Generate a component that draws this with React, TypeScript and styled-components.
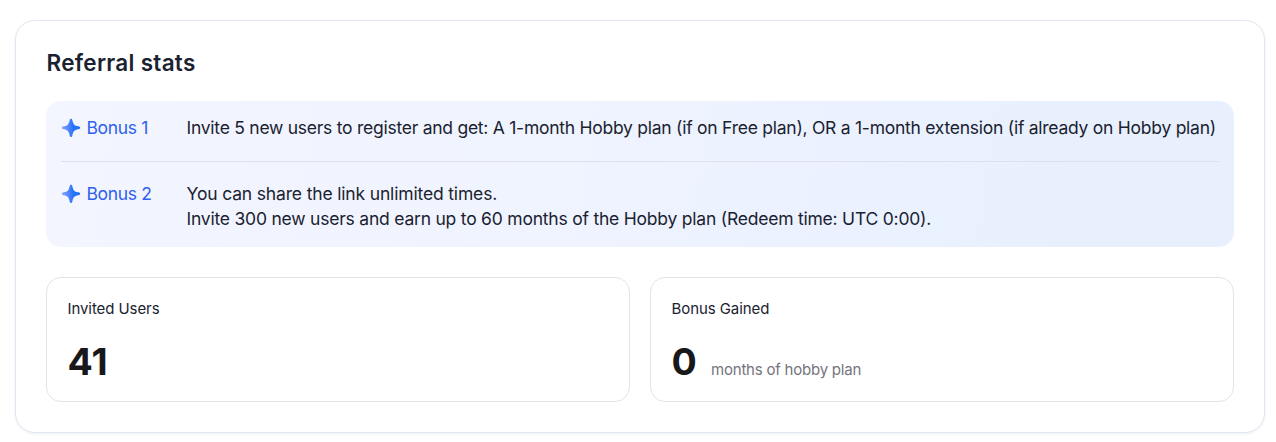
import React from "react";
import styled, { createGlobalStyle } from "styled-components";

const GlobalStyle = createGlobalStyle`
  * { box-sizing: border-box; }
  body { margin: 0; background: #fff; font-family: Inter, "Liberation Sans", sans-serif; color: #1a2230; }
`;

const Page = styled.main`
  padding: 20px 11px 9px 15px;
`;

const Card = styled.section`
  height: 413px;
  padding: 27px 30px 30px;
  border: 1px solid #e1e7f2;
  border-radius: 20px;
  background: #fff;
  box-shadow: 0 1px 3px rgba(40, 60, 110, 0.08);
`;

const Title = styled.h2`
  margin: 0 0 23px;
  padding-left: 0.6px;
  font-size: 22.5px;
  line-height: 30px;
  font-weight: 600;
  letter-spacing: 0.28px;
`;

const Banner = styled.div`
  height: 146px;
  padding: 14px 14px 15px 15px;
  border-radius: 15px;
  background: linear-gradient(98deg, #f3f5ff 0%, #f0f4ff 40%, #ebf1ff 65%, #e8f0fe 85%, #e8f0fe 100%);
`;

const BonusRow = styled.div`
  display: flex;
  align-items: flex-start;
  font-size: 17.5px;
  line-height: 25px;
  & + & {
    margin-top: 21px;
    padding-top: 19px;
    border-top: 1px solid #dfe1e8;
  }
`;

const BonusName = styled.div`
  display: flex;
  align-items: center;
  gap: 5.5px;
  width: 125.5px;
  color: #2f62ee;
  letter-spacing: -0.35px;
`;

const BonusText = styled.p<{ $spacing: number }>`
  margin: 0;
  white-space: nowrap;
  letter-spacing: ${(p) => p.$spacing}px;
`;

const Stats = styled.div`
  display: grid;
  grid-template-columns: 1fr 1fr;
  gap: 20px;
  margin-top: 30px;
`;

const StatCard = styled.div`
  height: 125px;
  padding: 21px 20px;
  border: 1px solid #e3e4e8;
  border-radius: 15px;
`;

const StatLabel = styled.div`
  padding-left: 0.5px;
  font-size: 15px;
  line-height: 20px;
  letter-spacing: -0.08px;
`;

const StatValue = styled.div`
  display: flex;
  align-items: baseline;
  gap: 14.3px;
  margin-top: 20px;
  padding-left: 0.5px;
  line-height: 45px;
`;

const Figure = styled.span`
  font-size: 37.5px;
  font-weight: 700;
  color: #18181a;
`;

const Unit = styled.span`
  font-size: 15px;
  letter-spacing: -0.22px;
  color: #74747d;
`;

function Spark({ id }: { id: string }) {
  return (
    <svg width="20" height="20" viewBox="0 0 20 20">
      <defs>
        <linearGradient id={id} x1="0" y1="0" x2="1" y2="0">
          <stop offset="0" stopColor="#8ea4ff" />
          <stop offset="0.6" stopColor="#2874fb" />
          <stop offset="1" stopColor="#1e70ff" />
        </linearGradient>
      </defs>
      <path
        fill={`url(#${id})`}
        d="M10 .8c.8 0 1.200.6 1.400 1.600.8 3.700 1.800 5.100 5.800 5.900 1.300.3 2 .7 2 1.500s-.7 1.200-2 1.500c-4 .8-5 2.200-5.800 5.900-.2 1.100-.6 1.800-1.400 1.800s-1.200-.7-1.400-1.800c-.8-3.700-1.800-5.100-5.800-5.900-1.300-.3-2-.7-2-1.500s.7-1.200 2-1.500c4-.8 5-2.200 5.800-5.900.2-1 .6-1.600 1.400-1.600Z"
      />
    </svg>
  );
}

export default function App() {
  return (
    <Page>
      <GlobalStyle />
      <Card>
        <Title>Referral stats</Title>
        <Banner>
          <BonusRow>
            <BonusName><Spark id="spark-1" />Bonus 1</BonusName>
            <BonusText $spacing={-0.255}>
              Invite 5 new users to register and get: A 1-month Hobby plan (if on Free plan), OR a 1-month extension (if already on Hobby plan)
            </BonusText>
          </BonusRow>
          <BonusRow>
            <BonusName><Spark id="spark-2" />Bonus 2</BonusName>
            <div>
              <BonusText $spacing={-0.16}>You can share the link unlimited times.</BonusText>
              <BonusText $spacing={-0.217}>
                Invite 300 new users and earn up to 60 months of the Hobby plan (Redeem time: UTC 0:00).
              </BonusText>
            </div>
          </BonusRow>
        </Banner>
        <Stats>
          <StatCard>
            <StatLabel>Invited Users</StatLabel>
            <StatValue><Figure>41</Figure></StatValue>
          </StatCard>
          <StatCard>
            <StatLabel>Bonus Gained</StatLabel>
            <StatValue><Figure>0</Figure><Unit>months of hobby plan</Unit></StatValue>
          </StatCard>
        </Stats>
      </Card>
    </Page>
  );
}
